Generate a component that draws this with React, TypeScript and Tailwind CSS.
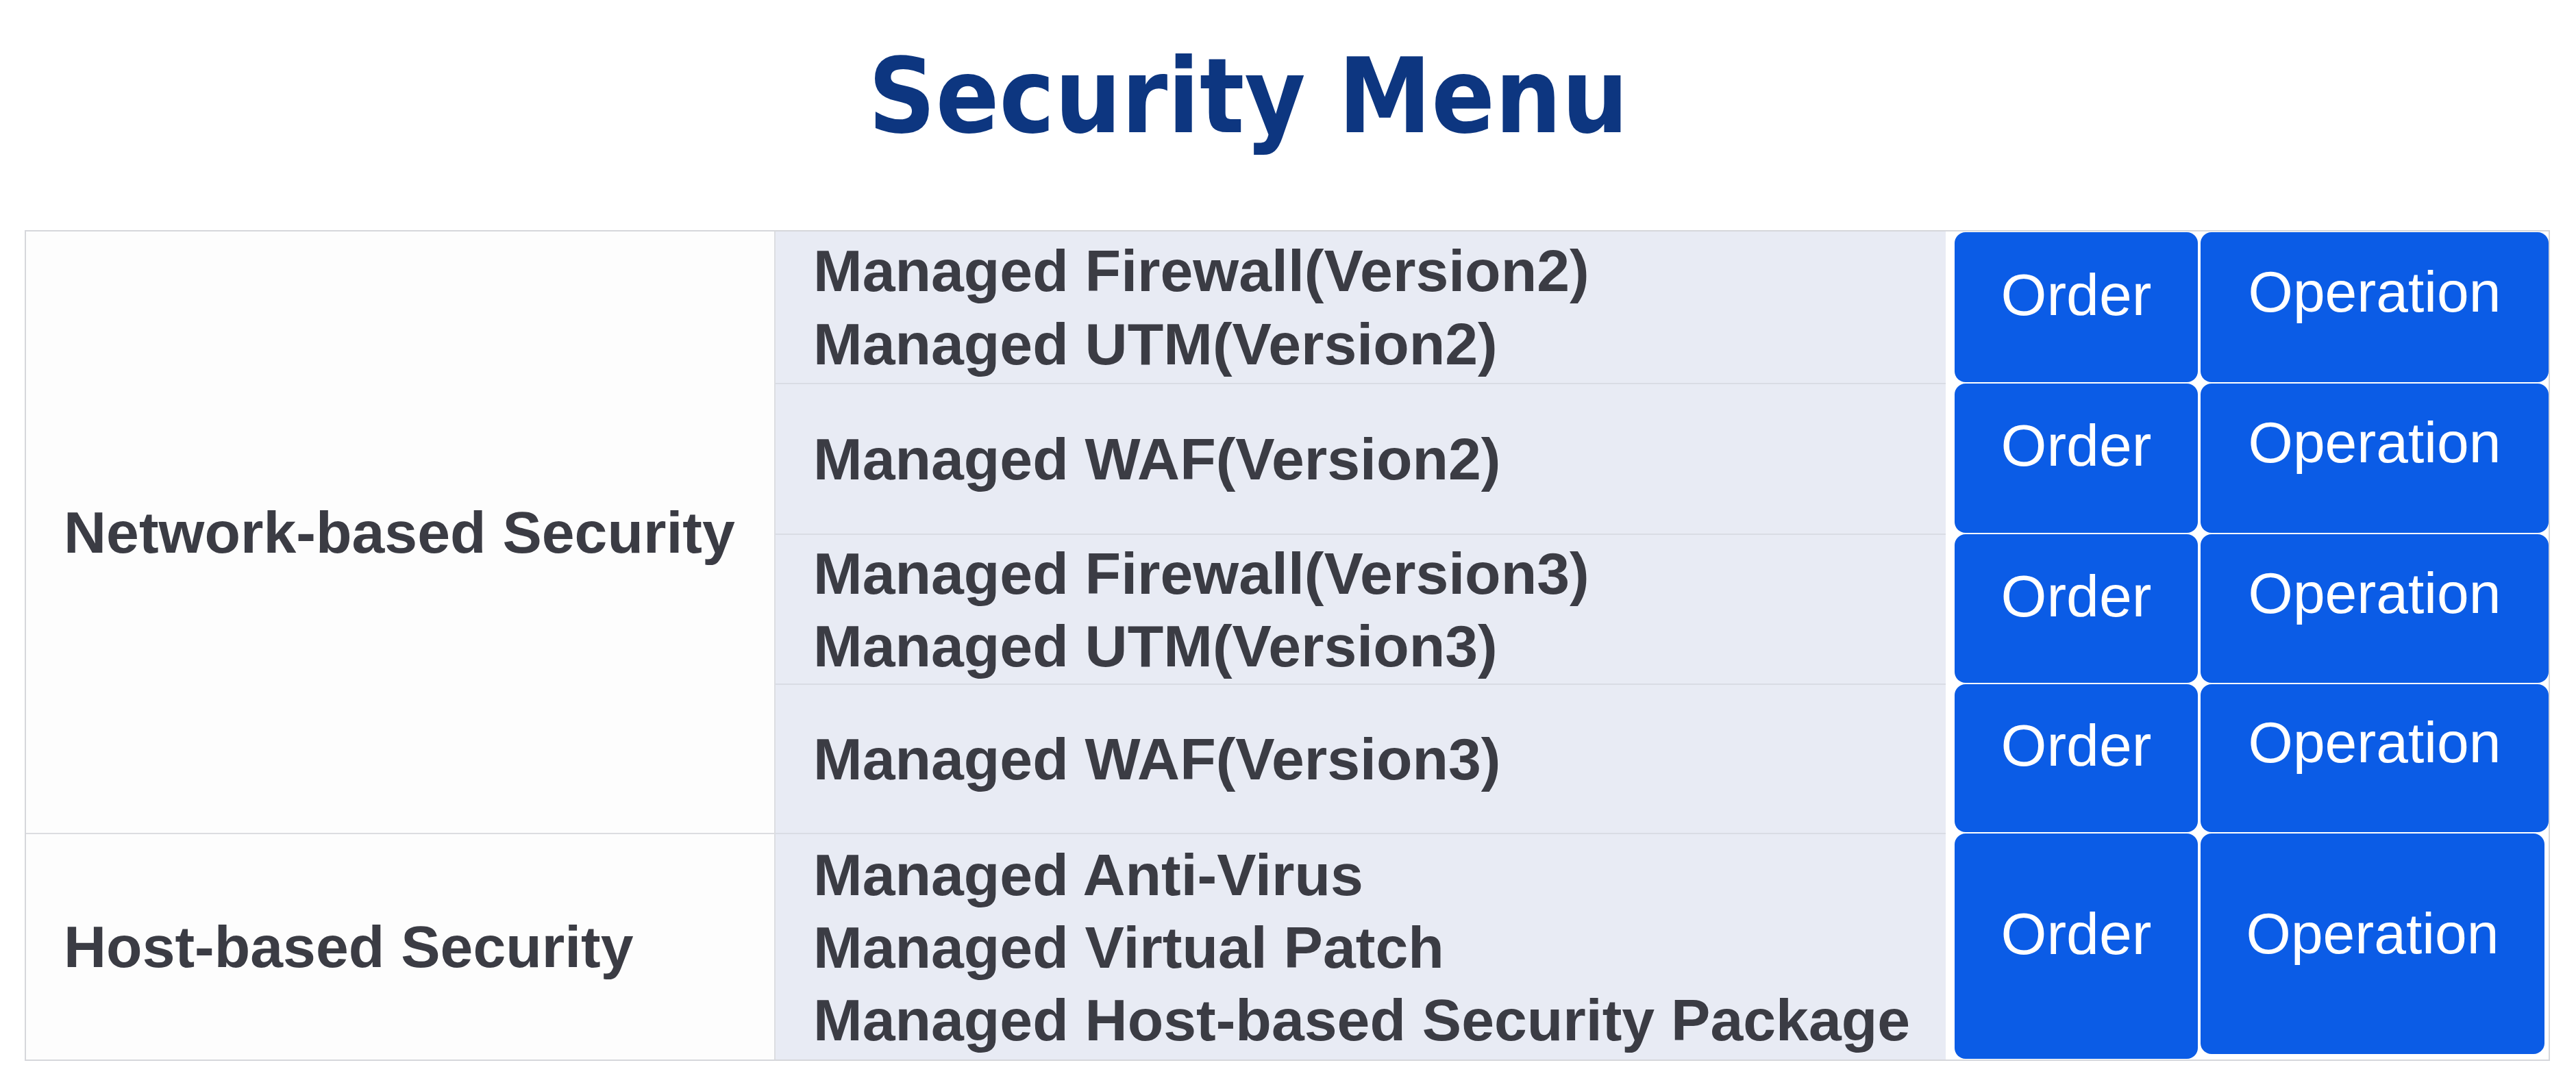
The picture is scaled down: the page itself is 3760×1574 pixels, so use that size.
import React from "react";

const font = { fontFamily: '"Liberation Sans", Arial, sans-serif' };

function Buttons({ last }: { last?: boolean }) {
  return (
    <div className="flex gap-[4px] pl-[13px] py-[1px] bg-white">
      <div className="w-[355px] h-full rounded-[16px] bg-[#0b5ce6] flex items-center justify-center pb-[38px] text-white text-[86px] leading-none">
        Order
      </div>
      <div
        className={
          last
            ? "w-[502px] h-[calc(100%-7px)] rounded-[16px] bg-[#0b5ce6] flex items-center justify-center pb-[30px] text-white text-[84px] leading-none"
            : "w-[508px] h-full rounded-[16px] bg-[#0b5ce6] flex items-center justify-center pb-[46px] text-white text-[84px] leading-none"
        }
      >
        Operation
      </div>
    </div>
  );
}

function Middle({ lines, first }: { lines: string[]; first?: boolean }) {
  return (
    <div
      className={
        first
          ? "bg-[#e8ebf4] pl-[55px] flex flex-col justify-center text-[86px] leading-[107px] font-bold text-[#3b3c44]"
          : "bg-[#e8ebf4] pl-[55px] flex flex-col justify-center text-[86px] leading-[106px] font-bold text-[#3b3c44] border-t-2 border-[#d9dce4]"
      }
    >
      {lines.map((l) => (
        <div key={l} className="whitespace-nowrap">
          {l}
        </div>
      ))}
    </div>
  );
}

export default function App() {
  return (
    <div className="w-[3760px] h-[1574px] bg-white overflow-hidden" style={font}>
      <div className="flex justify-center pr-[116px] pt-[65px]">
        <h1
          className="h-[150px] text-[152px] leading-none font-bold text-[#0d3680] font-stretch-condensed"
          style={{ fontFamily: '"DejaVu Sans Condensed", "DejaVu Sans", Verdana, sans-serif' }}
        >
          Security Menu
        </h1>
      </div>
      <div className="mt-[121px] ml-[36px] w-[3686px] border-2 border-[#d6d7db] grid grid-cols-[1094px_1708px_880px] grid-rows-[221px_220px_219px_218px_331px]">
        <div className="row-span-4 bg-[#fdfdfd] border-r-2 border-[#dcdde1] flex items-center pl-[55px] text-[86px] font-bold text-[#3b3c44] whitespace-nowrap">
          Network-based Security
        </div>
        <Middle first lines={["Managed Firewall(Version2)", "Managed UTM(Version2)"]} />
        <Buttons />
        <Middle lines={["Managed WAF(Version2)"]} />
        <Buttons />
        <Middle lines={["Managed Firewall(Version3)", "Managed UTM(Version3)"]} />
        <Buttons />
        <Middle lines={["Managed WAF(Version3)"]} />
        <Buttons />
        <div className="bg-[#fdfdfd] border-r-2 border-t-2 border-[#dcdde1] flex items-center pl-[55px] text-[86px] font-bold text-[#3b3c44] whitespace-nowrap">
          Host-based Security
        </div>
        <Middle
          lines={[
            "Managed Anti-Virus",
            "Managed Virtual Patch",
            "Managed Host-based Security Package",
          ]}
        />
        <Buttons last />
      </div>
    </div>
  );
}
